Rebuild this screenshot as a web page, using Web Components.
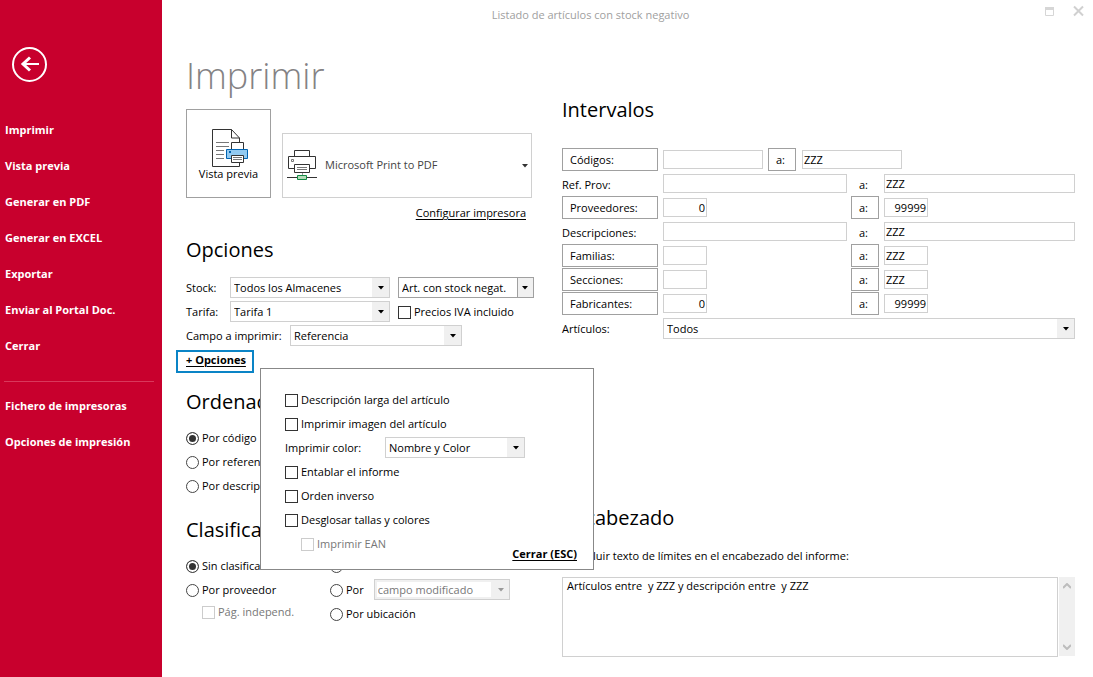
<!DOCTYPE html>
<html lang="es">
<head>
<meta charset="utf-8">
<title>Listado de artículos con stock negativo</title>
<style>
body { margin: 0; font: 11px/16px "Open Sans", "Noto Sans", sans-serif; color: #000; background: #fff; }
</style>
</head>
<body>
<print-app></print-app>

<script>
const define = (name, html, setup) => {
  const tpl = document.createElement('template');
  tpl.innerHTML = '<style>*{box-sizing:border-box}:host{display:block;box-sizing:border-box}</style>' + html;
  customElements.define(name, class extends HTMLElement {
    constructor() {
      super();
      this.attachShadow({ mode: 'open' }).appendChild(tpl.content.cloneNode(true));
    }
    connectedCallback() {
      if (this.ready) return;
      this.ready = true;
      if (setup) setup(this, this.shadowRoot);
    }
  });
};

define('nav-item', `
<style>
a { display: block; padding: 8px 5px; line-height: 20px; font-size: 11px; font-weight: 700; color: #fff; text-decoration: none; }
a:hover { background: #a90026; }
</style>
<a href="#"><slot></slot></a>`);

define('side-nav', `
<style>
:host { background: #c8002d; padding-top: 46px; min-height: 100vh; }
button { display: block; margin: 0 0 29px 11px; padding: 0; border: 0; background: none; width: 37px; height: 37px; }
svg { display: block; }
hr { margin: 17px 8px 6px 4px; border: 0; border-top: 1px solid #d9385b; }
</style>
<button aria-label="Volver"><svg width="37" height="37" viewBox="0 0 37 37" fill="none" stroke="#fff"><circle cx="18.500" cy="18.500" r="16.500" stroke-width="2"/><path d="M11 18h17" stroke-width="2"/><path d="M19 11.500l-7 6.500 7 6.500" stroke-width="3"/></svg></button>
<nav>
<nav-item>Imprimir</nav-item><nav-item>Vista previa</nav-item><nav-item>Generar en PDF</nav-item><nav-item>Generar en EXCEL</nav-item><nav-item>Exportar</nav-item><nav-item>Enviar al Portal Doc.</nav-item><nav-item>Cerrar</nav-item>
<hr>
<nav-item>Fichero de impresoras</nav-item><nav-item>Opciones de impresión</nav-item>
</nav>`);

define('window-bar', `
<style>
:host { display: flex; align-items: flex-start; height: 52px; color: #a0a0a0; font-size: 11px; }
span { flex: 1; text-align: center; padding-top: 7px; }
div { display: flex; gap: 18px; width: 74px; padding: 5px 0 0 25px; }
button { border: 0; padding: 0; background: none; width: 11px; height: 13px; }
svg { display: block; }
</style>
<span><slot></slot></span>
<div>
<button aria-label="Maximizar"><svg width="11" height="13" fill="none" stroke="#d6d6d6"><path d="M1.500 2.500h8v8h-8z"/><path d="M1 3.500h9" stroke-width="3"/></svg></button>
<button aria-label="Cerrar"><svg width="11" height="13" fill="none" stroke="#d0d0d0" stroke-width="2"><path d="M1 1.500l9 9M10 1.500l-9 9"/></svg></button>
</div>`);

define('section-title', `
<style>h2 { margin: 0; font-size: 20px; line-height: 28px; font-weight: 400; }</style>
<h2><slot></slot></h2>`);

define('combo-box', `
<style>
:host { height: 21px; margin-bottom: 1px; position: relative; flex: none; }
select { appearance: none; display: block; width: 100%; height: 100%; margin: 0; padding: 1px 18px 0 3px; border: 1px solid #d0d0d0; border-radius: 0; font: inherit; color: #000; opacity: 1;
 background: linear-gradient(#f0f0f0, #f0f0f0) right / 17px 100% no-repeat #fff; }
:host([strong]) select { border-color: #a0a0a0; background: linear-gradient(#a0a0a0, #a0a0a0) right 15px top / 1px 100% no-repeat, linear-gradient(#f0f0f0, #f0f0f0) right / 15px 100% no-repeat #fff; }
select:disabled { color: #777; border: 1px solid #d0d0d0; background: linear-gradient(#fff, #fff) 2px 2px / calc(100% - 20px) calc(100% - 4px) no-repeat #f0f0f0; }
svg { position: absolute; right: 6px; top: 8px; pointer-events: none; fill: #000; }
:host([disabled]) svg { fill: #999; }
</style>
<select></select><svg width="6" height="5"><path d="M0 1h6L3 4.500z"/></svg>`, (el, root) => {
  const s = root.querySelector('select');
  s.add(new Option(el.getAttribute('value')));
  s.setAttribute('aria-label', el.getAttribute('label'));
  s.disabled = el.hasAttribute('disabled');
});

define('check-option', `
<style>
:host { height: 24px; flex: none; }
label { display: flex; align-items: center; height: 100%; gap: 3px; white-space: nowrap; }
input { appearance: none; flex: none; margin: 0; width: 13px; height: 13px; border: 1px solid #333; background: #fff; }
input:checked { background: #333; box-shadow: inset 0 0 0 2px #fff; }
:host([disabled]) { color: #777; }
input:disabled { border-color: #ccc; }
</style>
<label><input type="checkbox"><span><slot></slot></span></label>`, (el, root) => {
  root.querySelector('input').disabled = el.hasAttribute('disabled');
});

define('radio-option', `
<style>
:host { height: 24px; flex: none; }
label { display: flex; align-items: center; height: 100%; gap: 3px; white-space: nowrap; }
input { appearance: none; flex: none; margin: 0; width: 13px; height: 13px; border: 1px solid #444; border-radius: 50%; background: #fff; }
input:checked { background: #333; box-shadow: inset 0 0 0 2px #fff; }
</style>
<label><input type="radio"><span><slot></slot></span></label>`, (el, root) => {
  const input = root.querySelector('input');
  input.name = el.getAttribute('group');
  input.checked = el.hasAttribute('checked');
  if (el.hasAttribute('label')) input.setAttribute('aria-label', el.getAttribute('label'));
  input.addEventListener('change', () => {
    el.getRootNode().querySelectorAll('radio-option[group="' + input.name + '"]').forEach(o => {
      if (o !== el) o.shadowRoot.querySelector('input').checked = false;
    });
  });
});

define('printer-picker', `
<style>
:host { display: grid; grid-template-columns: 85px 250px; column-gap: 11px; align-items: end; }
.preview { height: 89px; border: 1px solid #a0a0a0; background: #fff; padding: 0; font: inherit; line-height: 12px; color: #000; display: flex; flex-direction: column; align-items: center; }
.preview svg { margin: 18px 0 0 2px; }
.printer { position: relative; height: 65px; }
select { appearance: none; width: 100%; height: 100%; margin: 0; border: 1px solid #d0d0d0; border-radius: 0; background: #fff; padding: 0 20px 1px 42px; font: inherit; color: #444; }
.printer svg { position: absolute; pointer-events: none; left: 5px; top: 16px; }
.printer .arrow { left: auto; right: 4px; top: 30px; fill: #333; }
a { grid-column: 2; justify-self: end; margin: 6px 6px 0 0; line-height: 18px; color: #000; text-underline-offset: 2px; }
</style>
<button class="preview"><svg width="38" height="40" viewBox="211 128 38 40" fill="#fff" stroke="#333">
<path d="M212.500 129.500h19l8 8.500v28.500h-27z"/><path d="M231.500 129.500v8.500h8" fill="none"/>
<path d="M216 142.500h13M216 146.500h13M216 150.500h8M216 154.500h8M216 158.500h8" stroke="#777"/>
<path d="M231.500 142.500h12v8h-12z"/><path d="M226.500 149.500h21v9h-21z" fill="#91c9f0" stroke="#0063b1"/><path d="M229 151h2v2h-2z" fill="#0063b1" stroke="none"/>
<path d="M231.500 155.500h12v7h-12z"/><path d="M233 157.500h9M233 159.500h9" stroke="#777"/></svg><span>Vista previa</span></button>
<div class="printer"><select aria-label="Impresora"><option>Microsoft Print to PDF</option></select>
<svg width="30" height="31" viewBox="287 149 30 31" fill="#fff" stroke="#333"><path d="M294.500 150.500h15v6h-15z"/><path d="M288.500 156.500h27v12h-27z"/><path d="M291.500 159.500h2v2h-2z" stroke="#777"/><path d="M294.500 164.500h15v8h-15z"/><path d="M297 167.500h10M297 169.500h10" stroke="#777"/><path d="M302.500 173v3" stroke="#999"/><path d="M287 177.500h30"/><path d="M297.500 175.500h9v4h-9z" fill="#b5dbb9" stroke="#0f8b43"/></svg>
<svg class="arrow" width="6" height="5"><path d="M0 1h6L3 4.500z"/></svg></div>
<a href="#">Configurar impresora</a>`);

define('more-options', `
<style>
:host { position: relative; z-index: 5; padding-top: 2px; height: 26px; }
.open { display: block; width: 78px; height: 23px; margin-left: -10px; border: 2px solid #0a84c6; padding: 0 0 4px 8px; background: #fff; color: #000; font: inherit; font-weight: 700; text-align: left; line-height: 15px; }
u { text-underline-offset: 2px; }
dialog { display: block; position: absolute; left: 74px; top: 20px; width: 334px; height: 202px; margin: 0; padding: 19px 16px 7px 24px; border: 1px solid #888; background: #fff; color: #000; }
.row { display: grid; grid-template-columns: 100px 140px; align-items: center; height: 24px; }
.foot { display: flex; justify-content: space-between; padding-left: 16px; height: 30px; }
a { align-self: end; font-weight: 700; color: #000; text-underline-offset: 2px; }
dialog.closed { display: none; }
</style>
<button class="open"><u>+ Opciones</u></button>
<dialog open>
<check-option>Descripción larga del artículo</check-option>
<check-option>Imprimir imagen del artículo</check-option>
<div class="row"><span>Imprimir color:</span><combo-box label="Imprimir color" value="Nombre y Color"></combo-box></div>
<check-option>Entablar el informe</check-option>
<check-option>Orden inverso</check-option>
<check-option>Desglosar tallas y colores</check-option>
<div class="foot"><check-option disabled>Imprimir EAN</check-option><a href="#">Cerrar (ESC)</a></div>
</dialog>`, (el, root) => {
  const d = root.querySelector('dialog');
  root.querySelector('.open').onclick = () => d.classList.remove('closed');
  root.querySelector('a').onclick = e => { e.preventDefault(); d.classList.add('closed'); };
  document.addEventListener('keydown', e => { if (e.key === 'Escape') d.classList.add('closed'); });
});

define('range-row', `
<style>
:host { display: grid; grid-template-columns: 97px 184px 29px 1fr; column-gap: 4px; height: 24px; align-items: start; }
:host([size="medium"]) { grid-template-columns: 96px 100px 29px 100px; column-gap: 5px; }
:host([size="short"]) input { width: 44px; }
button { height: 23px; width: 96px; border: 1px solid #a0a0a0; background: #fff; padding: 0 0 0 7px; font: inherit; text-align: left; color: #000; }
button.to { width: 28px; }
span { padding-top: 5px; }
span.to { padding-left: 8px; }
input { width: 100%; height: 19px; margin: 2px 0 0; padding: 0 1px 1px; border: 1px solid #d0d0d0; font: inherit; color: #000; background: #fff; min-width: 0; }
:host([numeric]) input { text-align: right; }
</style>`, (el, root) => {
  const plain = el.hasAttribute('plain'), name = el.getAttribute('label');
  const add = (tag, text, cls) => {
    const n = document.createElement(tag);
    if (text) n.textContent = text;
    if (cls) n.className = cls;
    root.appendChild(n);
    return n;
  };
  const box = (value, label) => { const i = add('input'); i.type = 'text'; i.value = value || ''; i.setAttribute('aria-label', label); };
  add(plain ? 'span' : 'button', name + ':');
  box(el.getAttribute('from'), name + ' desde');
  add(plain ? 'span' : 'button', 'a:', 'to');
  box(el.getAttribute('to'), name + ' hasta');
});

define('range-list', `
<style>
.last { display: grid; grid-template-columns: 97px 1fr; column-gap: 4px; padding-top: 2px; }
span { padding-top: 3px; }
</style>
<range-row label="Códigos" to="ZZZ" size="medium"></range-row>
<range-row label="Ref. Prov" to="ZZZ" plain></range-row>
<range-row label="Proveedores" from="0" to="99999" size="short" numeric></range-row>
<range-row label="Descripciones" to="ZZZ" plain></range-row>
<range-row label="Familias" to="ZZZ" size="short"></range-row>
<range-row label="Secciones" to="ZZZ" size="short"></range-row>
<range-row label="Fabricantes" from="0" to="99999" size="short" numeric></range-row>
<div class="last"><span>Artículos:</span><combo-box label="Artículos" value="Todos"></combo-box></div>`);

define('header-note', `
<style>
div { display: grid; grid-template-columns: 1fr 16px; column-gap: 1px; margin-top: 9px; }
textarea { display: block; height: 80px; margin: 0; padding: 0 4px; border: 1px solid #d0d0d0; resize: none; font: inherit; color: #000; overflow: hidden; }
i { display: flex; flex-direction: column; justify-content: space-between; align-items: center; padding: 6px 0; background: #f0f0f0; height: 79px; }
svg { display: block; fill: none; stroke: #bdbdbd; stroke-width: 2; }
</style>
<check-option>Incluir texto de límites en el encabezado del informe:</check-option>
<div><textarea aria-label="Encabezado del informe">Artículos entre  y ZZZ y descripción entre  y ZZZ</textarea>
<i aria-hidden="true"><svg width="8" height="6"><path d="M0 5l4-4 4 4"/></svg><svg width="8" height="6"><path d="M0 1l4 4 4-4"/></svg></i></div>`);

define('print-app', `
<style>
:host { display: grid; grid-template-columns: 162px minmax(0, 1fr); min-height: 100vh; }
.cols { display: grid; grid-template-columns: 348px minmax(0, 1fr); column-gap: 28px; padding: 0 18px 0 24px; }
h1 { margin: 0 0 9px; font-size: 36px; line-height: 48px; font-weight: 350; color: #848284; }
.opts { margin: 14px 0 12px; }
.line { display: flex; align-items: center; height: 24px; }
.line > span { width: 44px; flex: none; }
.line > span.wide { width: 104px; }
.w160 { width: 160px; margin-right: 8px; }
.w136 { width: 136px; }
.w172 { width: 172px; }
.order { padding-top: 14px; margin-bottom: 18px; }
.choices { margin-top: 10px; }
.two { display: grid; grid-template-columns: 144px 1fr; }
.indent { margin-left: 16px; height: 20px; }
.por { display: flex; gap: 10px; align-items: center; height: 24px; }
.ranges { margin: 24px 0 164px; }
.right { padding-top: 44px; }
.note { margin-top: 12px; }
</style>
<side-nav></side-nav>
<main>
<window-bar>Listado de artículos con stock negativo</window-bar>
<div class="cols">
<section>
<h1>Imprimir</h1>
<printer-picker></printer-picker>
<section-title class="opts">Opciones</section-title>
<div class="line"><span>Stock:</span><combo-box class="w160" label="Stock" value="Todos los Almacenes"></combo-box><combo-box class="w136" strong label="Filtro de stock" value="Art. con stock negat."></combo-box></div>
<div class="line"><span>Tarifa:</span><combo-box class="w160" label="Tarifa" value="Tarifa 1"></combo-box><check-option>Precios IVA incluido</check-option></div>
<div class="line"><span class="wide">Campo a imprimir:</span><combo-box class="w172" label="Campo a imprimir" value="Referencia"></combo-box></div>
<more-options></more-options>
<div class="order">
<section-title>Ordenación</section-title>
<div class="choices">
<radio-option group="orden" checked>Por código</radio-option>
<radio-option group="orden">Por referencia</radio-option>
<radio-option group="orden">Por descripción</radio-option>
</div>
</div>
<section-title>Clasificación</section-title>
<div class="choices two">
<div><radio-option group="clase" checked>Sin clasificar</radio-option><radio-option group="clase">Por proveedor</radio-option><check-option class="indent" disabled>Pág. independ.</check-option></div>
<div><radio-option group="clase" label="Por familia"></radio-option><div class="por"><radio-option group="clase">Por</radio-option><combo-box class="w136" disabled label="Campo de clasificación" value="campo modificado"></combo-box></div><radio-option group="clase">Por ubicación</radio-option></div>
</div>
</section>
<section class="right">
<section-title>Intervalos</section-title>
<range-list class="ranges"></range-list>
<section-title>Encabezado</section-title>
<header-note class="note"></header-note>
</section>
</div>
</main>`);
</script>
</body>
</html>
